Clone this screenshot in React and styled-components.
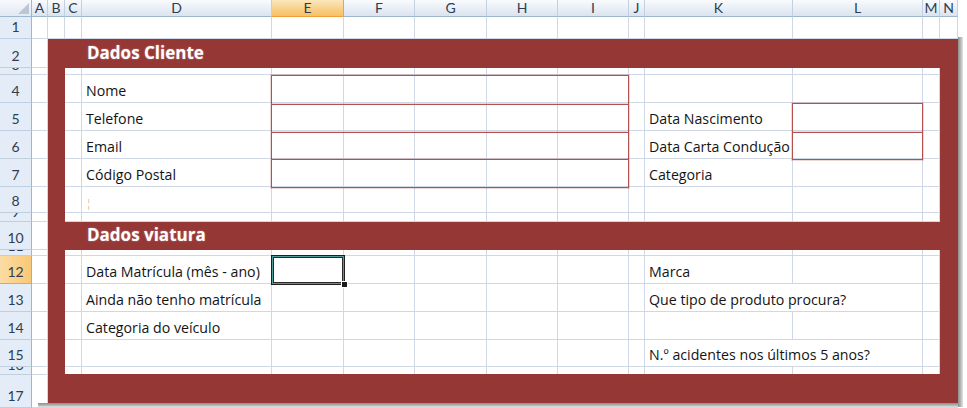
import React from 'react';
import styled, { createGlobalStyle, css } from 'styled-components';

const GlobalStyle = createGlobalStyle`
  *, *::before, *::after { box-sizing: border-box; }
  html, body { margin: 0; padding: 0; background: #fff; }
  body { font-family: Lato, "Open Sans", sans-serif; }
`;

const RED = '#953735';
const GRID = '#d0d7e5';
const FIELD = '#b4504e';

const COLS = [
  ['A', 16], ['B', 17], ['C', 17], ['D', 190], ['E', 72], ['F', 71], ['G', 72],
  ['H', 71], ['I', 71], ['J', 16], ['K', 148], ['L', 130], ['M', 17], ['N', 18],
];
const ROWS = [
  [1, 22], [2, 29], [3, 7], [4, 28], [5, 28], [6, 28], [7, 28], [8, 26], [9, 9],
  [10, 28], [11, 6], [12, 28], [13, 28], [14, 28], [15, 27], [16, 8], [17, 33],
];

const colLine = (letter) => COLS.findIndex((c) => c[0] === letter) + 2;
const rowLine = (n) => n + 1;

const LABELS = {
  D4: { text: 'Nome' },
  D5: { text: 'Telefone' },
  D6: { text: 'Email' },
  D7: { text: 'Código Postal' },
  D8: { text: '¦', faint: true },
  D12: { text: 'Data Matrícula (mês - ano)' },
  D13: { text: 'Ainda não tenho matrícula' },
  D14: { text: 'Categoria do veículo' },
  K5: { text: 'Data Nascimento' },
  K6: { text: 'Data Carta Condução' },
  K7: { text: 'Categoria' },
  K12: { text: 'Marca' },
  K13: { text: 'Que tipo de produto procura?', span: 2 },
  K15: { text: 'N.º acidentes nos últimos 5 anos?', span: 2 },
};

const Sheet = styled.div`
  display: grid;
  grid-template-columns: 32px ${COLS.map((c) => `${c[1]}px`).join(' ')} 1fr;
  grid-template-rows: 17px ${ROWS.map((r) => `${r[1]}px`).join(' ')};
  width: 967px;
  height: 408px;
  overflow: hidden;
  background: #fff;
  position: relative;
`;

const Corner = styled.div`
  grid-row: 1;
  grid-column: 1;
  background: linear-gradient(#f7f9fc, #e2e9f3);
  border-right: 1px solid #9eb6ce;
  border-bottom: 1px solid #9eb6ce;
  display: flex;
  align-items: flex-end;
  justify-content: flex-end;
  padding: 0 2px 2px 0;
`;

const ColHeader = styled.div`
  grid-row: 1;
  grid-column: ${(p) => p.$col};
  display: flex;
  align-items: center;
  justify-content: center;
  font-size: 14px;
  line-height: 16px;
  color: #2d3e50;
  background: linear-gradient(#f9fbfd 0%, #e8eef6 55%, #dbe3ee 100%);
  border-right: 1px solid #c3d0df;
  border-bottom: 1px solid #9eb6ce;
  overflow: hidden;
  ${(p) =>
    p.$active &&
    css`
      background: linear-gradient(#fce7bd 0%, #f9d089 55%, #f6c264 100%);
      border-right-color: #f2a244;
      border-bottom-color: #f29d39;
    `}
`;

const RowHeader = styled.div`
  grid-column: 1;
  grid-row: ${(p) => p.$row};
  display: flex;
  align-items: flex-end;
  justify-content: center;
  overflow: hidden;
  font-size: 14px;
  line-height: 16px;
  color: #2d3e50;
  background: #e4ecf7;
  border-right: 1px solid #9eb6ce;
  border-bottom: 1px solid #c0cfdf;
  ${(p) =>
    p.$active &&
    css`
      background: linear-gradient(90deg, #fcdca3, #f9c877);
      border-right-color: #f29d39;
      border-bottom-color: #f2a244;
    `}
`;

const RowNumber = styled.span`
  margin-bottom: ${(p) => (p.$short ? '1px' : '3px')};
  flex: none;
`;

const Cell = styled.div`
  grid-row: ${(p) => p.$row};
  grid-column: ${(p) => p.$col} / span ${(p) => p.$span};
  border-right: 1px solid ${GRID};
  border-bottom: 1px solid ${GRID};
  display: flex;
  align-items: flex-end;
  min-width: 0;
  min-height: 0;
  overflow: visible;
`;

const Label = styled.span`
  margin: 0 0 3px 4px;
  font-family: "Open Sans", "Noto Sans", sans-serif;
  font-size: 14.2px;
  line-height: 16px;
  color: #141414;
  white-space: nowrap;
  ${(p) =>
    p.$faint &&
    css`
      color: #e2b27c;
      font-size: 10px;
      line-height: 10px;
      margin-bottom: 4px;
    `}
`;

const Frame = styled.div`
  grid-column: ${colLine('B')} / ${colLine('N') + 1};
  grid-row: ${rowLine(2)} / ${rowLine(17) + 1};
  align-self: start;
  height: 364px;
  display: grid;
  grid-template-columns: 17px 1fr 18px;
  grid-template-rows: 29px 154px 28px 124px 29px;
  position: relative;

  &::before {
    content: '';
    position: absolute;
    top: -2px;
    right: -5px;
    bottom: -4px;
    width: 5px;
    background: linear-gradient(90deg, #8e8e8e, #bdbdbd 60%, #e6e6e6);
  }
  &::after {
    content: '';
    position: absolute;
    left: -10px;
    right: 0;
    bottom: -4px;
    height: 4px;
    background: linear-gradient(#8e8e8e, #b5b5b5 60%, #e6e6e6);
  }
`;

const Band = styled.div`
  grid-column: 1 / -1;
  grid-row: ${(p) => p.$row};
  background: ${RED};
  display: flex;
  align-items: flex-end;
  padding: 0 0 4px 39px;
`;

const Side = styled.div`
  grid-column: ${(p) => p.$col};
  grid-row: 2 / 5;
  background: ${RED};
`;

const Title = styled.span`
  font-family: "Open Sans", "Noto Sans", sans-serif;
  font-weight: 700;
  font-size: 17px;
  line-height: 22px;
  color: #fff;
  text-shadow: 0 0 2px rgba(255, 220, 220, 0.45);
`;

const FieldGroup = styled.div`
  grid-column: ${(p) => p.$col};
  grid-row: ${(p) => p.$row};
  display: grid;
  grid-template-rows: repeat(${(p) => p.$count}, 1fr);
  border: 1px solid ${FIELD};
  box-shadow: 0 0 0 1px rgba(180, 80, 78, 0.22);
  margin: 0 0 -1px -1px;
`;

const Field = styled.div`
  & + & {
    border-top: 1px solid ${FIELD};
    box-shadow: 0 -1px 0 rgba(180, 80, 78, 0.22);
  }
`;

const Selection = styled.div`
  grid-column: ${colLine('E')};
  grid-row: ${rowLine(12)};
  margin: -1px -1px -1px -1px;
  border: 1px solid #1f1f1f;
  box-shadow: inset 0 0 0 1px #4f9c98, inset 0 0 0 2px #2a2a2a;
  position: relative;
`;

const FillHandle = styled.div`
  position: absolute;
  right: -4px;
  bottom: -4px;
  width: 7px;
  height: 7px;
  background: #1b1b1b;
  border: 1px solid #fff;
`;

const CornerMark = () => (
  <svg width="11" height="11" viewBox="0 0 11 11">
    <polygon points="11,0 11,11 0,11" fill="#b9c7d8" />
  </svg>
);

const cells = [];
ROWS.forEach(([r]) => {
  let skip = 0;
  COLS.forEach(([c]) => {
    if (skip > 0) {
      skip -= 1;
      return;
    }
    const key = `${c}${r}`;
    const info = LABELS[key];
    const span = info?.span || 1;
    skip = span - 1;
    cells.push({ key, row: rowLine(r), col: colLine(c), span, info });
  });
});

export default function App() {
  return (
    <>
      <GlobalStyle />
      <Sheet>
        <Corner>
          <CornerMark />
        </Corner>
        {COLS.map(([c]) => (
          <ColHeader key={c} $col={colLine(c)} $active={c === 'E'}>
            {c}
          </ColHeader>
        ))}
        {ROWS.map(([r, h]) => (
          <RowHeader key={r} $row={rowLine(r)} $active={r === 12}>
            <RowNumber $short={h < 12}>{r}</RowNumber>
          </RowHeader>
        ))}
        {cells.map((cell) => (
          <Cell key={cell.key} $row={cell.row} $col={cell.col} $span={cell.span}>
            {cell.info && <Label $faint={cell.info.faint}>{cell.info.text}</Label>}
          </Cell>
        ))}

        <FieldGroup
          $count={4}
          $col={`${colLine('E')} / ${colLine('I') + 1}`}
          $row={`${rowLine(4)} / ${rowLine(7) + 1}`}
        >
          <Field />
          <Field />
          <Field />
          <Field />
        </FieldGroup>
        <FieldGroup $count={2} $col={`${colLine('L')}`} $row={`${rowLine(5)} / ${rowLine(6) + 1}`}>
          <Field />
          <Field />
        </FieldGroup>

        <Selection>
          <FillHandle />
        </Selection>

        <Frame>
          <Band $row={1}>
            <Title>Dados Cliente</Title>
          </Band>
          <Side $col={1} />
          <Side $col={3} />
          <Band $row={3}>
            <Title>Dados viatura</Title>
          </Band>
          <Band $row={5} />
        </Frame>
      </Sheet>
    </>
  );
}
